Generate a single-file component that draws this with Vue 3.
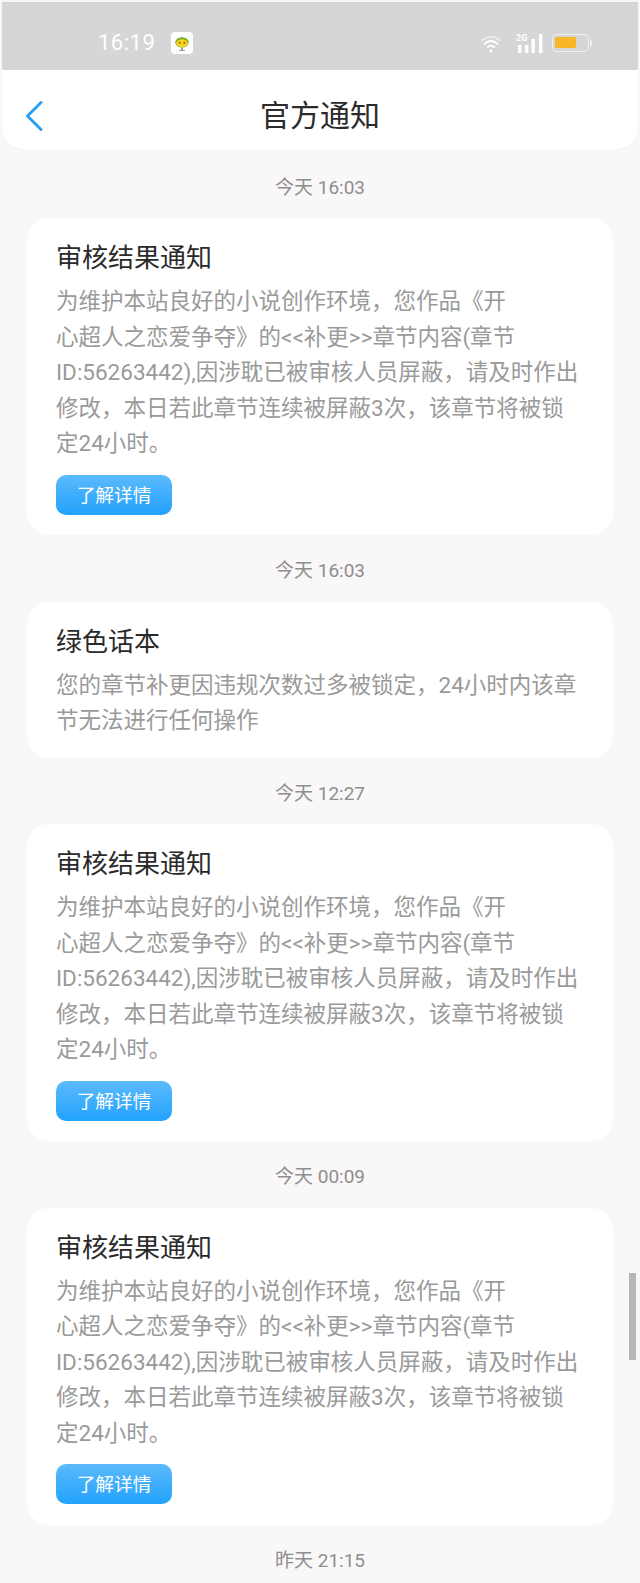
<script setup>
const body = ['为维护本站良好的小说创作环境，您作品《开', '心超人之恋爱争夺》的<<补更>>章节内容(章节', 'ID:56263442),因涉耽已被审核人员屏蔽，请及时作出', '修改，本日若此章节连续被屏蔽3次，该章节将被锁', '定24小时。']
const items = [
  { time: '今天 16:03', title: '审核结果通知', lines: body, btn: true },
  { time: '今天 16:03', title: '绿色话本', lines: ['您的章节补更因违规次数过多被锁定，24小时内该章', '节无法进行任何操作'], btn: false },
  { time: '今天 12:27', title: '审核结果通知', lines: body, btn: true },
  { time: '今天 00:09', title: '审核结果通知', lines: body, btn: true }
]
</script>

<template>
  <div class="page">
    <div class="status">
      <span class="clock">16:19</span>
      <span class="appicon">
        <svg width="18" height="18" viewBox="0 0 16 16">
          <path d="M8 12v2.400" stroke="#555" stroke-width="1"/>
          <path d="M5.500 14.600h5" stroke="#777" stroke-width=".7"/>
          <path d="M3 2.500l1 1.400M13 2.500l-1 1.400M8 1.200v1.600" stroke="#d8e6b8" stroke-width=".7"/>
          <ellipse cx="8" cy="7.400" rx="6" ry="4.600" fill="#6fa928"/>
          <ellipse cx="8" cy="8.200" rx="5.200" ry="3.600" fill="#f7d21e"/>
          <circle cx="5.900" cy="7.800" r="1" fill="#a86f14"/>
          <circle cx="10.100" cy="7.800" r="1" fill="#a86f14"/>
        </svg>
      </span>
      <span class="spacer"></span>
      <svg class="wifi" width="20" height="19" viewBox="0 0 20 19" fill="none" stroke="#fff" stroke-width="1.800" stroke-linecap="round">
        <path d="M1 6.500a13 13 0 0 1 18 0" opacity=".55"/>
        <path d="M3.500 9.800a9 9 0 0 1 13 0"/>
        <path d="M6.800 13a4.500 4.500 0 0 1 6.400 0"/>
        <circle cx="10" cy="17" r="1.500" fill="#fff" stroke="none"/>
      </svg>
      <span class="signal">
        <span class="twog">2G</span>
        <svg width="27" height="19" viewBox="0 0 27 19" fill="#fff">
          <rect x="2" y="11" width="3.400" height="8"/>
          <rect x="9" y="11" width="3.400" height="8"/>
          <rect x="15.500" y="5" width="3.400" height="14"/>
          <rect x="23" y="0" width="3.400" height="19"/>
        </svg>
      </span>
      <span class="battery"><span class="level"></span></span>
      <span class="nub"></span>
    </div>
    <header class="bar">
      <svg class="back" width="20" height="32" viewBox="0 0 20 32" fill="none">
        <path d="M17 2.500 3.500 16 17 29.500" stroke="#2d9ff0" stroke-width="3" stroke-linecap="round" stroke-linejoin="round"/>
      </svg>
      <h1 class="heading">官方通知</h1>
    </header>
    <main class="list">
      <section v-for="(item, i) in items" :key="i" class="group">
        <div class="time">{{ item.time }}</div>
        <article class="card" :class="{ short: !item.btn }">
          <h2 class="title">{{ item.title }}</h2>
          <p class="text"><span v-for="(l, j) in item.lines" :key="j" class="line">{{ l }}</span></p>
          <button v-if="item.btn" class="more">了解详情</button>
        </article>
      </section>
      <div class="time last">昨天 21:15</div>
    </main>
    <div class="thumb"></div>
  </div>
</template>

<style>
html, body { margin: 0; background: #f9f7f8; }
</style>

<style scoped>
.page {
  position: relative;
  width: 640px;
  height: 1583px;
  overflow: hidden;
  background: #f9f7f8;
  font-family: Roboto, "Noto Sans CJK SC", sans-serif;
}
.status {
  box-sizing: border-box;
  height: 68px;
  margin: 2px 2px 0;
  background: #d6d6d6;
  display: flex;
  align-items: center;
  padding: 14px 46px 0 96px;
  color: #fff;
}
.clock { font: 22px/1 Roboto, sans-serif; letter-spacing: .5px; }
.appicon {
  width: 22px;
  height: 22px;
  margin-left: 16px;
  border-radius: 4px;
  background: #fff;
  display: flex;
  align-items: center;
  justify-content: center;
}
.spacer { flex: 1; }
.wifi { margin-right: 15px; }
.signal { position: relative; width: 27px; height: 19px; margin-right: 9px; display: block; }
.signal svg { position: absolute; left: 0; top: 0; }
.twog { position: absolute; left: 0; top: 0; font: bold 9px/1 Roboto, sans-serif; }
.battery {
  box-sizing: border-box;
  width: 37px;
  height: 18px;
  border: 1.500px solid #f1f1f1;
  border-radius: 5px;
  padding: 2px;
  display: block;
}
.level { display: block; width: 21px; height: 11px; background: #f9b626; border-radius: 2px; }
.nub { width: 2px; height: 7px; margin-left: 1px; background: #f1f1f1; border-radius: 0 2px 2px 0; }
.bar {
  position: relative;
  box-sizing: border-box;
  margin: 0 2px;
  height: 80px;
  padding-top: 12px;
  background: #fff;
  border-radius: 0 0 24px 24px;
  display: flex;
  align-items: center;
  justify-content: center;
  box-shadow: 0 1px 1px #f2f0f1;
}
.back { position: absolute; left: 22px; top: 30px; }
.heading { margin: 0; font-size: 30px; font-weight: 400; line-height: 1; color: #2b2b2b; }
.list { padding: 0 27px; }
.group { display: block; }
.time {
  height: 66.670px;
  line-height: 72px;
  text-align: center;
  font-size: 19px;
  color: #8e8e8e;
}
.last { height: 60px; }
.group:first-child .time { height: 68px; line-height: 76px; }
.card {
  box-sizing: border-box;
  height: 317px;
  padding: 21px 29px 0;
  background: #fff;
  border-radius: 22px;
}
.card.short { height: 156px; }
.title { margin: 0; font-size: 26px; font-weight: 400; line-height: 38px; color: #2a2a2a; }
.text { margin: 7px 0 0; font-size: 22.500px; line-height: 35.500px; color: #9a9a9a; }
.line { display: block; white-space: nowrap; }
.more {
  display: block;
  width: 116px;
  height: 40px;
  margin: 13px 0 0;
  padding: 3px 0 0;
  border: 0;
  border-radius: 10px;
  background: linear-gradient(#5cbafb, #22a2fd);
  color: #fff;
  font: inherit;
  font-size: 18.700px;
  line-height: 37px;
}
.thumb {
  position: absolute;
  left: 629px;
  top: 1273px;
  width: 7px;
  height: 87px;
  background: #b7b7b7;
}
</style>
